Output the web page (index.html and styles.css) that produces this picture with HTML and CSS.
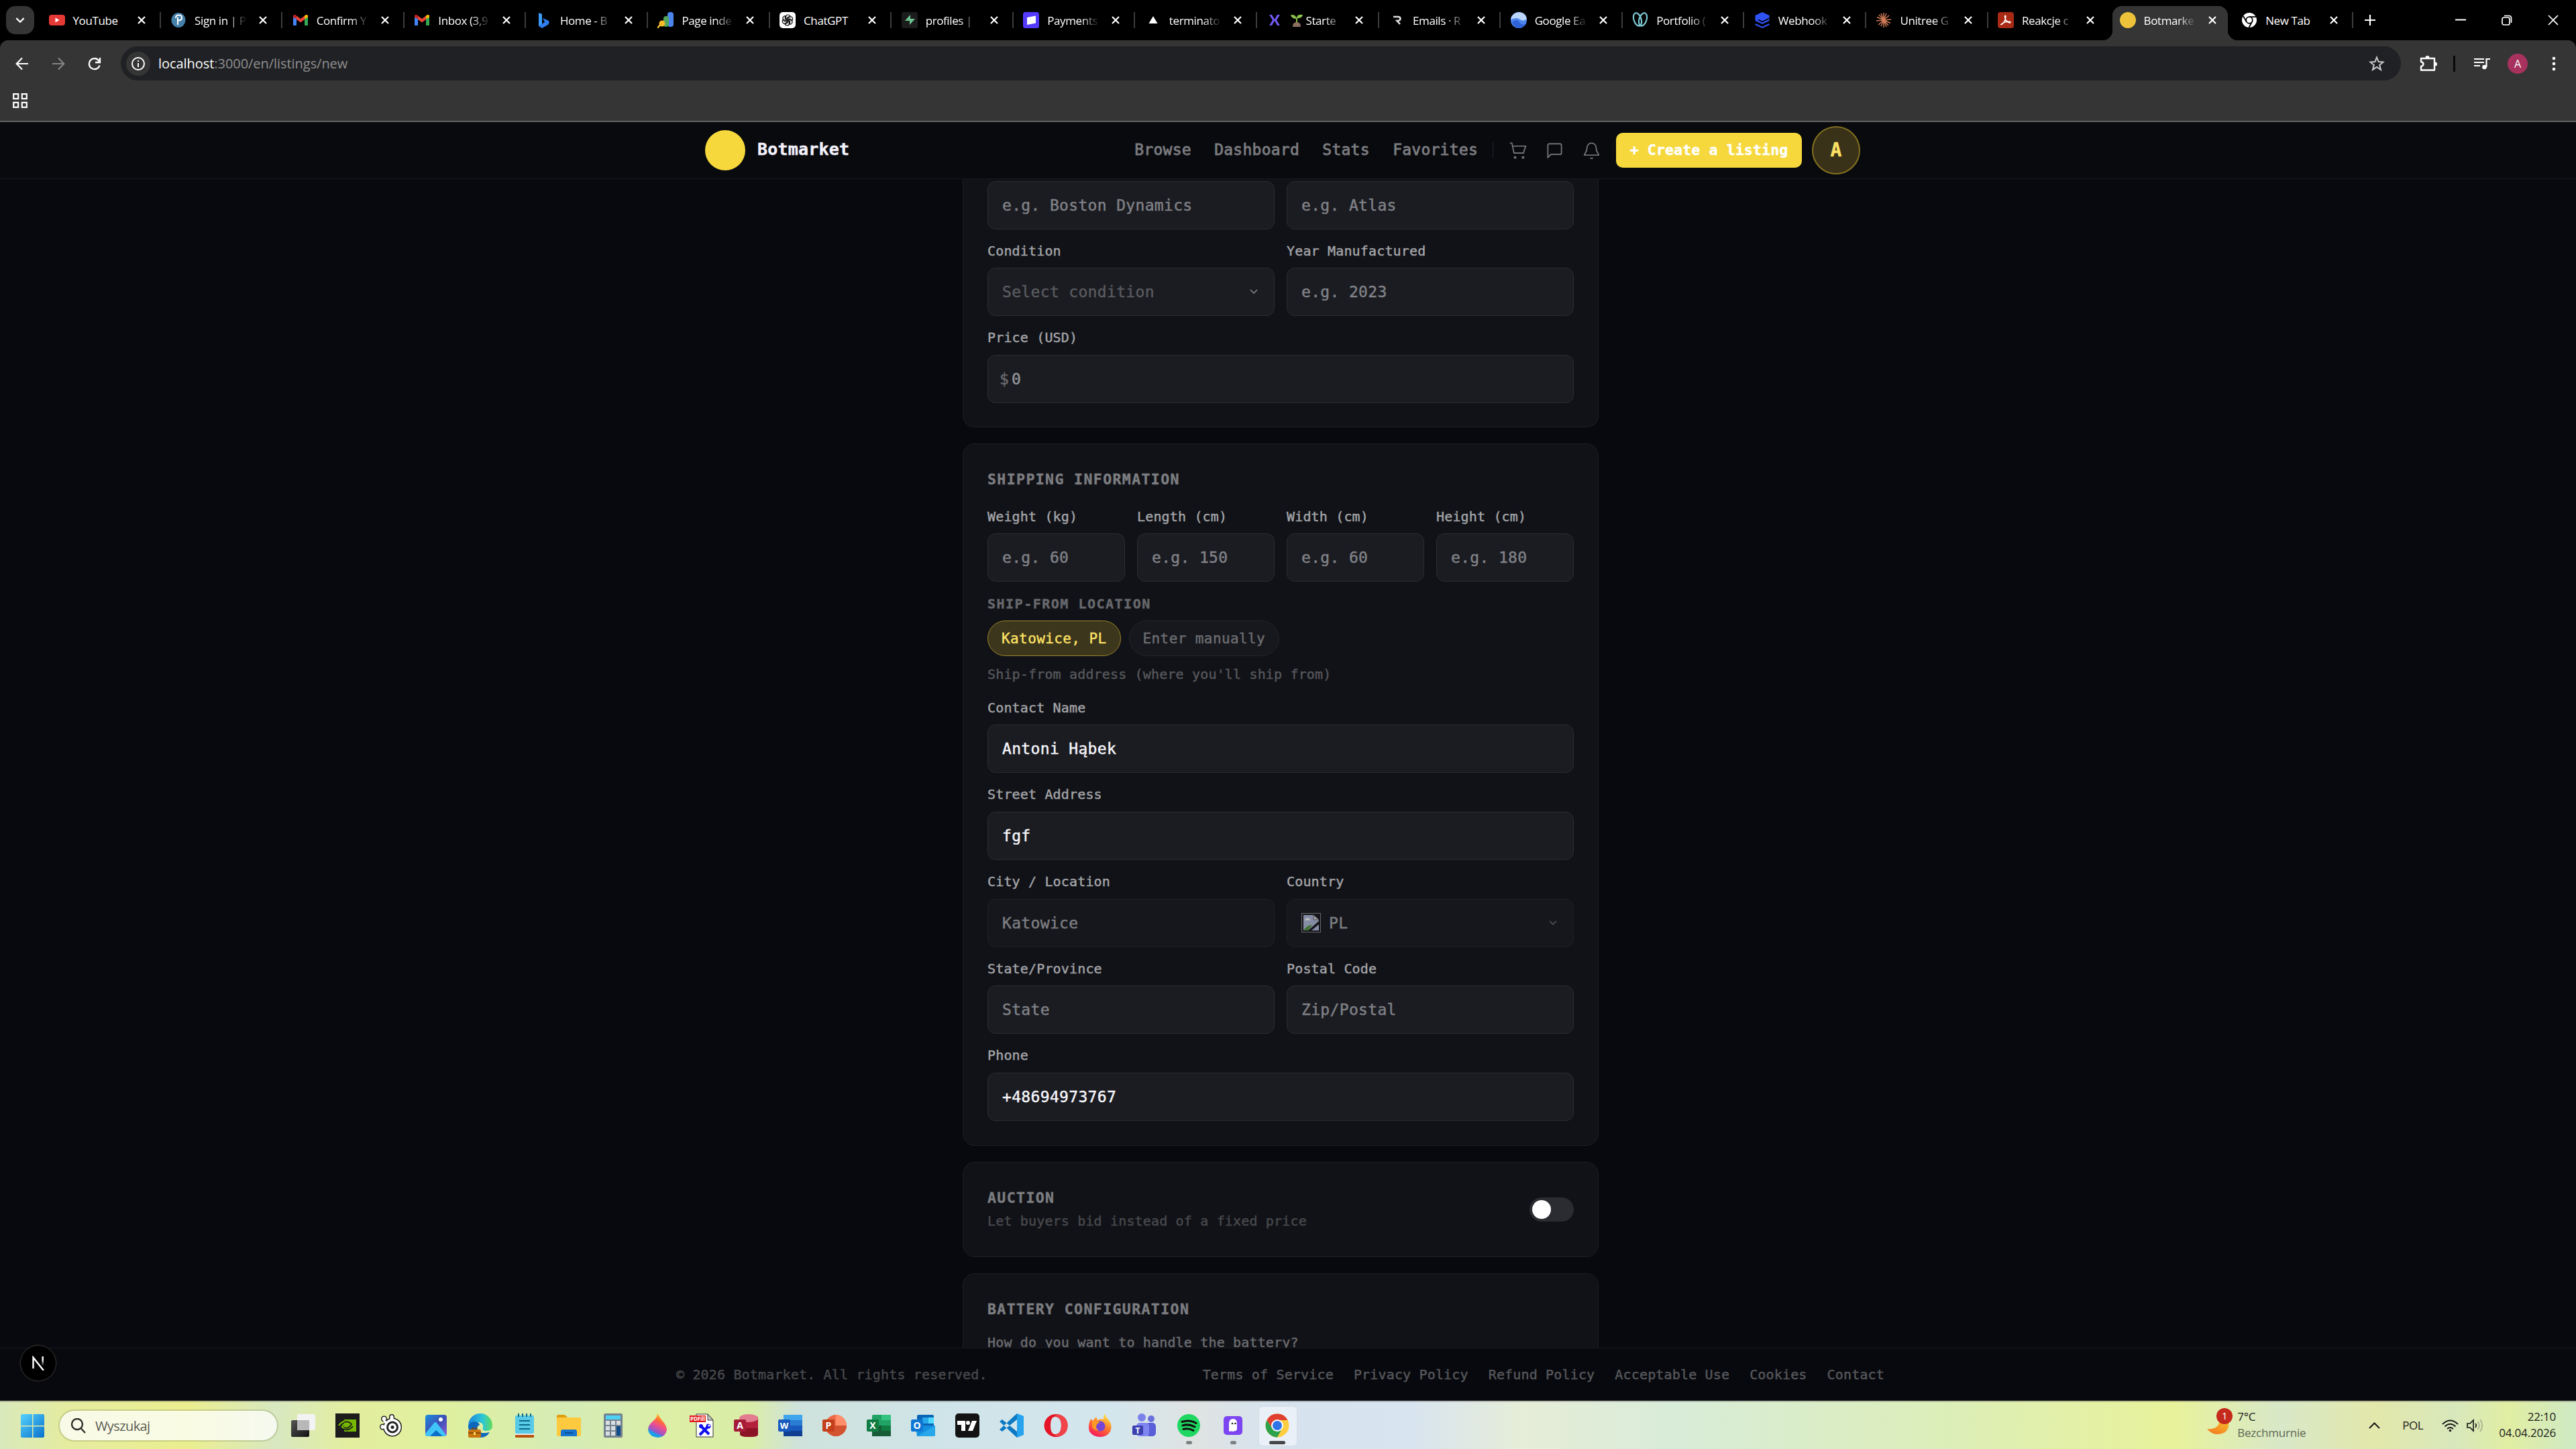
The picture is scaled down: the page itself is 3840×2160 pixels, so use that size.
FILE: index.html
```html
<!DOCTYPE html>
<html lang="en">
<head>
    <meta charset="UTF-8">
    <meta name="viewport" content="width=device-width, initial-scale=1.0">
    <title>Botmarket</title>
    <link rel="stylesheet" href="styles.css">
</head>
<body>
    <!-- Shared icons -->
    <svg class="defs" width="0" height="0">
        <symbol id="x" viewBox="0 0 12 12"><path d="M1 1l10 10M11 1L1 11" stroke="#fff" stroke-width="2.2"/></symbol>
        <symbol id="gmail" viewBox="0 0 24 24"><path d="M1 20V6l5 4v10z" fill="#4285f4"/><path d="M18 20V10l5-4v14z" fill="#34a853"/><path d="M18 10V5.5q3-2.5 5-.5v3z" fill="#fbbc04"/><path d="M1 8V5q2-2 5 .5V10z" fill="#c5221f"/><path d="M6 5.5l6 4.5 6-4.5V11l-6 4.5L6 11z" fill="#ea4335"/></symbol>
        <symbol id="chev" viewBox="0 0 12 8"><path d="M1 1l5 5 5-5" fill="none" stroke="currentColor" stroke-width="1.5"/></symbol>
    </svg>

    <!-- Browser tabs -->
    <div class="tabs">
        <div class="tab-search"><svg width="14" height="9" viewBox="0 0 12 8"><path d="M1 1l5 5 5-5" fill="none" stroke="#fff" stroke-width="2"/></svg></div>
        <div class="tab">
            <svg class="fav" viewBox="0 0 24 24"><rect y="4" width="24" height="16" rx="4" fill="#e53935"/><path d="M9.5 8.5v7l6-3.5z" fill="#fff"/></svg>
            <span class="tab-title">YouTube</span><svg class="close"><use href="#x"/></svg>
        </div>
        <div class="tab">
            <svg class="fav" viewBox="0 0 24 24"><ellipse cx="12" cy="12" rx="10.5" ry="11" fill="#4580a8"/><path d="M8 9q0-4.500 4.500-4.500T17 8.500q0 4-5 4M11 8v11" fill="none" stroke="#fff" stroke-width="2"/></svg>
            <span class="tab-title">Sign in | P</span><svg class="close"><use href="#x"/></svg>
        </div>
        <div class="tab">
            <svg class="fav"><use href="#gmail"/></svg>
            <span class="tab-title">Confirm Y</span><svg class="close"><use href="#x"/></svg>
        </div>
        <div class="tab">
            <svg class="fav"><use href="#gmail"/></svg>
            <span class="tab-title">Inbox (3,9</span><svg class="close"><use href="#x"/></svg>
        </div>
        <div class="tab">
            <svg class="fav" viewBox="0 0 24 24"><path d="M4 1l5 2v15l-5 3z" fill="#3b9cf5"/><path d="M10 9l9 4q2 5-3 7l-7 4-5-3 9-6z" fill="#2f7bee"/></svg>
            <span class="tab-title">Home - B</span><svg class="close"><use href="#x"/></svg>
        </div>
        <div class="tab">
            <svg class="fav" viewBox="0 0 24 24"><rect x="15" width="9" height="22" rx="4" fill="#4c84ee"/><rect x="9" y="6" width="8" height="16" rx="4" fill="#4fa65b"/><circle cx="7" cy="17" r="4.5" fill="#f5bb2d"/><path d="M4 19l-4 5" stroke="#f5bb2d" stroke-width="2.5"/></svg>
            <span class="tab-title">Page inde</span><svg class="close"><use href="#x"/></svg>
        </div>
        <div class="tab">
            <svg class="fav" viewBox="0 0 24 24"><rect width="24" height="24" rx="5" fill="#fff"/><g fill="none" stroke="#111" stroke-width="1.2"><path id="petal" d="M9.600 13.400V7q0-3 3-3 2 0 3.200 1.700l-4 2.300v4.600"/><use href="#petal" transform="rotate(60 12 12)"/><use href="#petal" transform="rotate(120 12 12)"/><use href="#petal" transform="rotate(180 12 12)"/><use href="#petal" transform="rotate(240 12 12)"/><use href="#petal" transform="rotate(300 12 12)"/></g></svg>
            <span class="tab-title">ChatGPT</span><svg class="close"><use href="#x"/></svg>
        </div>
        <div class="tab">
            <svg class="fav" viewBox="0 0 24 24"><rect width="24" height="24" rx="3" fill="#1c1c1c"/><path d="M13 4v6h7l-8 9v-6H5z" fill="#6cc491"/></svg>
            <span class="tab-title">profiles |</span><svg class="close"><use href="#x"/></svg>
        </div>
        <div class="tab">
            <svg class="fav" viewBox="0 0 24 24"><rect width="24" height="24" rx="3.5" fill="#533afd"/><path d="M6 8l13-2.5v11L6 19z" fill="#fff"/></svg>
            <span class="tab-title">Payments</span><svg class="close"><use href="#x"/></svg>
        </div>
        <div class="tab">
            <svg class="fav" viewBox="0 0 24 24"><path d="M12 6l6.5 11h-13z" fill="#fff"/></svg>
            <span class="tab-title">terminato</span><svg class="close"><use href="#x"/></svg>
        </div>
        <div class="tab">
            <svg class="fav" viewBox="0 0 24 24"><path d="M4 4h4l4 7 4-7h4l-5 8 5 8h-4l-4-7-4 7H4l5-8z" fill="#7258f2"/></svg>
            <span class="tab-title"><svg class="sprout" viewBox="0 0 18 20"><path d="M9 13V6" stroke="#8bc34a" stroke-width="2"/><path d="M9 7Q1 7 0 1q8-1 9 6zM9 6q0-6 9-5-1 6-9 5z" fill="#8bc34a"/><path d="M3 19q0-7 6-7t6 7z" fill="#8d6e63"/></svg> Starte</span><svg class="close"><use href="#x"/></svg>
        </div>
        <div class="tab">
            <svg class="fav" viewBox="0 0 24 24"><path d="M7 7h7q3.5 0 3.5 3t-5 3l4.5 5" fill="none" stroke="#ddd" stroke-width="2.6"/></svg>
            <span class="tab-title">Emails · R</span><svg class="close"><use href="#x"/></svg>
        </div>
        <div class="tab">
            <svg class="fav" viewBox="0 0 24 24"><circle cx="12" cy="12" r="12" fill="#4d87ee"/><path d="M0 11Q2 1 12 0q10 0 12 10-5 5-10 1T0 11z" fill="#bcd6fb"/><path d="M2 15q7-6 11 0t9 2q-3 7-10 7-7-1-10-9z" fill="#2f62d5"/></svg>
            <span class="tab-title">Google Ea</span><svg class="close"><use href="#x"/></svg>
        </div>
        <div class="tab">
            <svg class="fav" viewBox="0 0 24 24"><g fill="none" stroke="#7cc6d2" stroke-width="2.2"><ellipse cx="8" cy="11" rx="5.5" ry="10" transform="rotate(-18 8 11)"/><ellipse cx="16" cy="11" rx="5.5" ry="10" transform="rotate(18 16 11)"/></g></svg>
            <span class="tab-title">Portfolio (</span><svg class="close"><use href="#x"/></svg>
        </div>
        <div class="tab">
            <svg class="fav" viewBox="0 0 24 24"><path d="M12 0l10.5 5v8L12 18 1.5 13V5z" fill="#2f52f5"/><path d="M6 11.5l6 3 10-5M1.5 16L12 22l10.5-6" fill="none" stroke="#000" stroke-width="1.6"/><path d="M1.5 18L12 23l10.5-5" fill="none" stroke="#2f52f5" stroke-width="2"/></svg>
            <span class="tab-title">Webhook</span><svg class="close"><use href="#x"/></svg>
        </div>
        <div class="tab">
            <svg class="fav" viewBox="0 0 24 24"><path d="M12 1v22M1 13l22-2M5 4l14 16M20 5L4 19M8 2l8 20M16 2L8 21M2 7.500l20 9" stroke="#d07a57" stroke-width="1.5"/></svg>
            <span class="tab-title">Unitree G</span><svg class="close"><use href="#x"/></svg>
        </div>
        <div class="tab no-sep">
            <svg class="fav" viewBox="0 0 24 24"><rect width="24" height="24" rx="4" fill="#a82a14"/><path d="M5 18.500c3 0 7-7 7-12 0-2-2-1.500-1.500 1 .8 4 4 7.500 7 8.500 2 .5 2-1.500 0-1.700-4-.4-9 .8-12.500 4.200z" fill="none" stroke="#fff" stroke-width="1.4"/></svg>
            <span class="tab-title">Reakcje c</span><svg class="close"><use href="#x"/></svg>
        </div>
        <div class="tab active no-sep">
            <svg class="fav" viewBox="0 0 24 24"><circle cx="12" cy="12" r="12" fill="#edc23a"/></svg>
            <span class="tab-title">Botmarke</span><svg class="close"><use href="#x"/></svg>
        </div>
        <div class="tab">
            <svg class="fav" viewBox="0 0 24 24"><circle cx="12" cy="12" r="11" fill="#fff"/><circle cx="12" cy="12" r="4.8" fill="#fff" stroke="#000" stroke-width="1.8"/><path d="M12 7.200h10M7.800 14.500L3 6M16 14.500L11.500 23" stroke="#000" stroke-width="1.8"/></svg>
            <span class="tab-title">New Tab</span><svg class="close"><use href="#x"/></svg>
        </div>
        <svg class="new-tab" width="18" height="18" viewBox="0 0 18 18"><path d="M9 1v16M1 9h16" stroke="#fff" stroke-width="2.2"/></svg>
        <div class="window-controls">
            <svg width="16" height="16" viewBox="0 0 16 16"><path d="M0 7.500h16" stroke="#fff" stroke-width="2"/></svg>
            <svg width="16" height="16" viewBox="0 0 16 16" fill="none" stroke="#fff" stroke-width="1.7"><rect x="1" y="4" width="11" height="11" rx="2.5"/><path d="M4 1.500h7q3.500 0 3.500 3.500v7"/></svg>
            <svg width="16" height="16" viewBox="0 0 16 16"><path d="M1 1l14 14M15 1L1 15" stroke="#fff" stroke-width="1.7"/></svg>
        </div>
    </div>

    <!-- Browser toolbar -->
    <div class="toolbar">
        <div class="toolbar-row">
            <div class="nav-buttons">
                <svg width="20" height="20" viewBox="0 0 20 20" fill="none" stroke="#fff" stroke-width="2.2"><path d="M19 10H2M10 1.500L1.700 10l8.300 8.500"/></svg>
                <svg width="20" height="20" viewBox="0 0 20 20" fill="none" stroke="#858585" stroke-width="2.2"><path d="M1 10h17M10 1.500l8.300 8.500-8.300 8.500"/></svg>
                <svg width="20" height="20" viewBox="0 0 20 20" fill="none" stroke="#fff" stroke-width="2.3"><path d="M17.500 12.500A8 8 0 1 1 17 6.500"/><path d="M18 1v7h-7"/></svg>
            </div>
            <div class="omnibox">
                <div class="site-info"><svg width="20" height="20" viewBox="0 0 20 20" fill="none" stroke="#fff" stroke-width="2"><circle cx="10" cy="10" r="9"/><path d="M10 9v6M10 5v2"/></svg></div>
                <span class="url"><b>localhost</b>:3000/en/listings/new</span>
                <svg class="star" width="24" height="24" viewBox="0 0 24 24"><path d="M12 2.500l2.600 6.600 7 .4-5.400 4.500 1.800 6.900-6-3.900-6 3.900L7.800 14 2.400 9.500l7-.4z" fill="none" stroke="#ccc" stroke-width="2"/></svg>
            </div>
            <div class="toolbar-end">
                <svg width="27" height="27" viewBox="0 0 27 27"><path d="M3 6h20v17.500H3V18q3.500-1 3.500-3.500T3 11z" fill="none" stroke="#fff" stroke-width="2.4" stroke-linejoin="round"/><path d="M9.500 5a3 3 0 0 1 6 0zM24 11.500a3 3 0 0 1 0 6z" fill="#fff"/></svg>
                <i class="bar"></i>
                <svg width="24" height="18" viewBox="0 0 24 18" fill="none" stroke="#fff" stroke-width="2.2"><path d="M0 2h15M0 7h15M0 12h9M18.500 14V2H24"/><circle cx="15.500" cy="14" r="3.3" fill="#fff" stroke="none"/></svg>
                <span class="profile">A</span>
                <svg width="6" height="22" viewBox="0 0 6 22" fill="#fff"><circle cx="3" cy="3" r="2.3"/><circle cx="3" cy="11" r="2.3"/><circle cx="3" cy="19" r="2.3"/></svg>
            </div>
        </div>
        <svg class="apps" width="22" height="22" viewBox="0 0 22 22" fill="none" stroke="#fff" stroke-width="2.2"><path d="M1.200 1.200h7v7h-7zM13.800 1.200h7v7h-7zM1.200 13.800h7v7h-7zM13.800 13.800h7v7h-7z"/></svg>
    </div>

    <!-- Page -->
    <div class="page">
        <header class="header">
            <span class="logo"></span>
            <span class="brand">Botmarket</span>
            <nav class="menu">
                <a>Browse</a>
                <a>Dashboard</a>
                <a>Stats</a>
                <a>Favorites</a>
            </nav>
            <i class="divider"></i>
            <div class="header-icons">
                <svg viewBox="0 0 24 24"><circle cx="8.5" cy="21" r="1"/><circle cx="19" cy="21" r="1"/><path d="M1.500 2h2.700l2.800 13.200h12.500L22.500 6H5.200"/></svg>
                <svg viewBox="0 0 24 24"><path d="M21 15a2 2 0 0 1-2 2H7l-4 4V5a2 2 0 0 1 2-2h14a2 2 0 0 1 2 2z"/></svg>
                <svg viewBox="0 0 24 24"><path d="M6 8a6 6 0 0 1 12 0c0 7 3.500 7.500 3.500 10h-19C2.500 15.500 6 15 6 8"/><path d="M10.300 21.500a2 2 0 0 0 3.400 0"/></svg>
            </div>
            <i class="divider faint"></i>
            <a class="create">+ Create a listing</a>
            <span class="avatar">A</span>
        </header>

        <main class="content">
            <section class="card card-cut">
                <div class="row">
                    <div class="field"><input placeholder="e.g. Boston Dynamics"></div>
                    <div class="field"><input placeholder="e.g. Atlas"></div>
                </div>
                <div class="row">
                    <div class="field"><label>Condition</label><div class="select muted">Select condition<svg class="chev"><use href="#chev"/></svg></div></div>
                    <div class="field"><label>Year Manufactured</label><input placeholder="e.g. 2023"></div>
                </div>
                <div class="row">
                    <div class="field"><label>Price (USD)</label><div class="select price"><span>$</span>0</div></div>
                </div>
            </section>

            <section class="card shipping">
                <h2>Shipping information</h2>
                <div class="row">
                    <div class="field"><label>Weight (kg)</label><input placeholder="e.g. 60"></div>
                    <div class="field"><label>Length (cm)</label><input placeholder="e.g. 150"></div>
                    <div class="field"><label>Width (cm)</label><input placeholder="e.g. 60"></div>
                    <div class="field"><label>Height (cm)</label><input placeholder="e.g. 180"></div>
                </div>
                <h3>Ship-from location</h3>
                <div class="pills">
                    <span class="pill selected">Katowice, PL</span>
                    <span class="pill">Enter manually</span>
                </div>
                <p class="hint">Ship-from address (where you'll ship from)</p>
                <div class="row">
                    <div class="field"><label>Contact Name</label><input value="Antoni Hąbek"></div>
                </div>
                <div class="row">
                    <div class="field"><label>Street Address</label><input value="fgf"></div>
                </div>
                <div class="row">
                    <div class="field"><label>City / Location</label><div class="select off">Katowice</div></div>
                    <div class="field"><label>Country</label><div class="select off">
                        <svg class="broken" viewBox="0 0 29 29"><rect x=".5" y=".5" width="28" height="28" fill="none" stroke="#8b8b8b"/><path d="M3 3h15l8 7v16H3z" fill="#b4c0e0"/><path d="M18 3v7h8z" fill="#ddd" stroke="#666"/><path d="M5 11q0-3 3-3 1-2 3 0 2 0 2 3z" fill="#fff"/><path d="M3 26q6-9 13-8l-6 8z" fill="#54983a"/><path d="M10 26L26 12v5L15 26z" fill="#16171b"/></svg>PL<svg class="chev"><use href="#chev"/></svg></div></div>
                </div>
                <div class="row">
                    <div class="field"><label>State/Province</label><input placeholder="State"></div>
                    <div class="field"><label>Postal Code</label><input placeholder="Zip/Postal"></div>
                </div>
                <div class="row">
                    <div class="field"><label>Phone</label><input value="+48694973767"></div>
                </div>
            </section>

            <section class="card auction">
                <div>
                    <h2>Auction</h2>
                    <p>Let buyers bid instead of a fixed price</p>
                </div>
                <span class="toggle"></span>
            </section>

            <section class="card battery">
                <h2>Battery configuration</h2>
                <p>How do you want to handle the battery?</p>
            </section>
        </main>

        <footer class="footer">
            <span>© 2026 Botmarket. All rights reserved.</span>
            <div class="footer-links">
                <a>Terms of Service</a>
                <a>Privacy Policy</a>
                <a>Refund Policy</a>
                <a>Acceptable Use</a>
                <a>Cookies</a>
                <a>Contact</a>
            </div>
        </footer>

        <!-- Dev tools badge -->
        <div class="next-badge">
            <svg width="20" height="22" viewBox="0 0 20 22"><defs><linearGradient id="nf" x1="0" y1="0" x2="0" y2="1"><stop offset=".4" stop-color="#fff"/><stop offset="1" stop-color="#fff" stop-opacity="0"/></linearGradient></defs><path d="M2.500 19V2.500L18 22" fill="none" stroke="#fff" stroke-width="2.4"/><rect x="15.500" y="1" width="2.4" height="14" fill="url(#nf)"/></svg>
        </div>
    </div>

    <!-- Taskbar -->
    <div class="taskbar">
        <svg class="start" width="35" height="35" viewBox="0 0 35 35"><defs><linearGradient id="win" gradientUnits="userSpaceOnUse" x1="0" y1="0" x2="35" y2="35"><stop stop-color="#55d3fc"/><stop offset="1" stop-color="#0a70cc"/></linearGradient></defs><path d="M1.500 0H17v17H0V1.500zM18.500 0H33.500L35 1.500V17H18.500zM0 18.500h17V35H1.500L0 33.500zM18.500 18.500H35v15L33.500 35h-15z" fill="url(#win)"/></svg>
        <div class="search">
            <svg width="23" height="23" viewBox="0 0 23 23" fill="none" stroke="#2f2f2b" stroke-width="2.4"><circle cx="10" cy="9" r="8"/><path d="M15.500 15l6.500 7"/></svg>
            <span>Wyszukaj</span>
        </div>
        <div class="apps-row">
            <div class="app"><svg viewBox="0 0 36 36"><defs><linearGradient id="tv" x2="1" y2="1"><stop stop-color="#555"/><stop offset="1" stop-color="#111"/></linearGradient></defs><rect y="10" width="27" height="25" rx="2" fill="url(#tv)"/><rect x="9" y="1" width="27" height="24" rx="2" fill="#f3f3f3"/><rect x="9" y="10" width="18" height="15" fill="#b8b8b8"/></svg></div>
            <div class="app"><svg viewBox="0 0 36 36"><rect width="36" height="36" fill="#1c1c1c"/><path d="M13 9h18v18H13z" fill="#76b900"/><path d="M5 18q8-11 19-3-6 11-14 5 3-7 9-3-2 4-4 3" fill="none" stroke="#76b900" stroke-width="2.4"/><path d="M13 13q7-2 11 3-5 8-11 5" fill="none" stroke="#1c1c1c" stroke-width="1.7"/><path d="M13 24q8 2 13-5" fill="none" stroke="#1c1c1c" stroke-width="1.7"/></svg></div>
            <div class="app"><svg viewBox="0 0 36 36"><g fill="#222"><rect x="14" y="1" width="8" height="14" rx="4"/><circle cx="6.500" cy="8" r="4.5"/><circle cx="4.500" cy="20" r="4.5"/><circle cx="19" cy="20.500" r="14"/></g><g fill="#fff"><rect x="15.500" y="2.500" width="5" height="12" rx="2.5"/><circle cx="6.500" cy="8" r="3"/><path d="M7 9l5 5-3 3-4-6z"/><circle cx="4.500" cy="20" r="3"/><path d="M4 18.500h6v3H4z"/><circle cx="19" cy="20.500" r="12.5"/></g><circle cx="19" cy="20.500" r="7.5" fill="none" stroke="#222" stroke-width="3"/><circle cx="19" cy="20.500" r="2.5" fill="#222"/></svg></div>
            <div class="app"><svg viewBox="0 0 36 36"><defs><linearGradient id="ph" x2="1" y2="1"><stop stop-color="#1b8fe0"/><stop offset=".5" stop-color="#3c4fb5"/><stop offset="1" stop-color="#8a62d6"/></linearGradient></defs><rect x="2" y="2" width="32" height="32" rx="4" fill="url(#ph)"/><path d="M2 30L15 14q2-2 4 0l14 18q-1 2-3 2H5q-3 0-3-4z" fill="#3fc4f8"/><path d="M9 34l9-9 10 9z" fill="#0d6fc9"/><circle cx="25" cy="9" r="3" fill="#fff"/></svg></div>
            <div class="app"><svg viewBox="0 0 36 36"><defs><linearGradient id="ed" x2="1"><stop stop-color="#1b84dc"/><stop offset=".6" stop-color="#2ec6d6"/><stop offset="1" stop-color="#5fdc58"/></linearGradient></defs><path d="M0 18A18 18 0 0 1 36 18q0 8-9 8-7 0-5-5 1-8-8-8T0 22z" fill="url(#ed)"/><path d="M0 20q2-8 10-8 6 1 7 5-4 2-4 6 1 9 19 5-5 8-14 8Q2 35 0 20z" fill="#0c67bd"/><rect y="24" width="19" height="12" rx="2" fill="#c9750e"/><path d="M0 29h19M6 24v-2h7v2" fill="none" stroke="#7c420a" stroke-width="1.5"/><path d="M9.500 28v4" stroke="#ffd75e" stroke-width="3"/></svg></div>
            <div class="app"><svg viewBox="0 0 36 36"><rect x="4" y="30" width="28" height="6" rx="1.5" fill="#b9510f"/><rect x="4" y="28" width="28" height="4" fill="#eee"/><rect x="4" y="3" width="28" height="27" rx="2" fill="#58c9e6"/><path d="M9 0v5M15 0v5M21 0v5M27 0v5M10 11h16M10 17h16M10 23h16" stroke="#0b6a88" stroke-width="2"/></svg></div>
            <div class="app"><svg viewBox="0 0 36 36"><path d="M0 4q0-2 2-2h10l4 4v6H0z" fill="#dd9d0c"/><rect y="6" width="36" height="28" rx="2" fill="#fdc93f"/><path d="M6 34V27q0-3 3-3h18q3 0 3 3v7z" fill="#1574d0"/><path d="M12 29h12" stroke="#0c4d92" stroke-width="2"/></svg></div>
            <div class="app"><svg viewBox="0 0 36 36"><rect x="4" width="28" height="36" rx="2.5" fill="#75838f"/><rect x="7" y="3" width="22" height="6" fill="#4fd0f5"/><path d="M7 11h6v6H7zM15 11h6v6h-6zM23 11h6v6h-6zM7 19h6v6H7zM15 19h6v6h-6zM7 27h6v6H7zM15 27h6v6h-6z" fill="#d9dee2"/><path d="M23 19h6v14h-6z" fill="#114a8b"/></svg></div>
            <div class="app"><svg viewBox="0 0 36 36"><defs><linearGradient id="pn" x1=".7" x2=".3" y2="1"><stop stop-color="#ffd000"/><stop offset=".3" stop-color="#ff6a3d"/><stop offset=".5" stop-color="#ef4e8e"/><stop offset=".75" stop-color="#9556c8"/><stop offset=".85" stop-color="#18a0ea"/></linearGradient></defs><path d="M18 0q3 6 9 13 5 6 5 12-2 10-13 11Q6 35 4 25q0-8 8-14 6-5 6-11z" fill="url(#pn)"/></svg></div>
            <div class="app"><svg viewBox="0 0 36 36"><path d="M10 1h17l8 9v25H10z" fill="#fff" stroke="#333"/><path d="M27 1v9h8z" fill="#ccc" stroke="#333"/><rect x="0" y="3" width="24" height="10" fill="#e21b1b"/><text x="12" y="11" class="ic" font-size="8" textLength="22">PDFill</text><path d="M16 18l13 13M28 19L15 32" stroke="#1010ee" stroke-width="4"/><circle cx="17" cy="19" r="3" fill="#1010ee"/><circle cx="28" cy="19" r="3.5" fill="#1010ee"/><circle cx="29" cy="18" r="1.5" fill="#fff"/></svg></div>
            <div class="app"><svg viewBox="0 0 36 36"><path d="M9 5v26q0 4 14 4t13-4V5z" fill="#b2203a"/><path d="M9 22h27v9q0 4-13 4T9 31z" fill="#8c1226"/><ellipse cx="22" cy="7" rx="14" ry="6" fill="#e27c8e"/><rect y="9" width="18" height="18" rx="2" fill="#a61c38"/><text x="9" y="23" class="ic" font-size="14">A</text></svg></div>
            <div class="app"><svg viewBox="0 0 36 36"><rect x="8" y="2" width="28" height="32" rx="2" fill="#2b7cd3"/><path d="M8 2h28v8H8z" fill="#41a5ee"/><path d="M8 18h28v8H8z" fill="#185abd"/><path d="M8 26h28v8H8z" fill="#103f91"/><rect y="9" width="18" height="18" rx="2" fill="#185abd"/><text x="9" y="22.500" class="ic" font-size="13">W</text></svg></div>
            <div class="app"><svg viewBox="0 0 36 36"><circle cx="20" cy="18" r="16" fill="#ed6c47"/><path d="M20 2a16 16 0 0 1 16 16H20z" fill="#ff8f6b"/><path d="M4 18a16 16 0 0 0 32 0z" fill="#d35230"/><rect y="9" width="18" height="18" rx="2" fill="#c43e1c"/><text x="9" y="23" class="ic" font-size="14">P</text></svg></div>
            <div class="app"><svg viewBox="0 0 36 36"><rect x="8" y="2" width="28" height="32" rx="2" fill="#21a366"/><path d="M22 2h14v8H22z" fill="#33c481"/><path d="M8 18h14v16H8z" fill="#185c37"/><path d="M22 18h14v8H22z" fill="#107c41"/><path d="M22 26h14v8H22z" fill="#185c37"/><rect y="9" width="18" height="18" rx="2" fill="#107c41"/><text x="9" y="23" class="ic" font-size="14">X</text></svg></div>
            <div class="app"><svg viewBox="0 0 36 36"><rect x="9" y="2" width="25" height="22" rx="2" fill="#0a64b5"/><path d="M17 6h9v9h-9z" fill="#28a8ea"/><path d="M26 6h8v9h-8z" fill="#50d9ff"/><path d="M7 18l29 0v14q0 2-2 2H9z" fill="#1490df"/><path d="M36 18L10 34h24q2 0 2-2z" fill="#28a8ea"/><rect y="9" width="18" height="18" rx="2" fill="#0f78d4"/><text x="9" y="23" class="ic" font-size="14">O</text></svg></div>
            <div class="app"><svg viewBox="0 0 36 36"><rect width="36" height="36" rx="5" fill="#131313"/><path d="M3 11h12v15H9v-9H3z" fill="#fff"/><circle cx="19" cy="14" r="3" fill="#fff"/><path d="M25 11h7l-6 15h-7z" fill="#fff"/></svg></div>
            <div class="app"><svg viewBox="0 0 36 36"><path d="M26 0l10 4v28l-10 4z" fill="#27a3ee"/><path d="M26 9L4 27l-4-3L26 0zM26 27L4 9l-4 3 26 24z" fill="#0c79c4"/></svg></div>
            <div class="app"><svg viewBox="0 0 36 36"><path fill-rule="evenodd" d="M18 1a17.500 17 0 1 0 .1 0zM18 5q8 1 8 13t-8 13-8-13 8-13z" fill="#e51426"/><path d="M22 1.500q13.500 3 13.500 16.500T22 34.500q-4 0-6-3.500 10 1 10-13T16 5q2-3.500 6-3.500z" fill="#f0434a"/></svg></div>
            <div class="app"><svg viewBox="0 0 36 36"><defs><linearGradient id="ff" x1=".8" x2=".3" y2="1"><stop stop-color="#fff04a"/><stop offset=".5" stop-color="#ff7b2c"/><stop offset="1" stop-color="#f5135e"/></linearGradient></defs><path d="M4 8l3 3 5-6 2 5q5-3 9-1 0-7 2-9 1 5 6 10 6 8 2 17-5 8-15 8T2 27Q-1 18 4 8z" fill="url(#ff)"/><circle cx="18" cy="19" r="7.5" fill="#7545d6"/><path d="M6 12q6-2 12 2-5 1-5 3-3 5 3 8-8 1-10-5z" fill="#ff9a25"/></svg></div>
            <div class="app"><svg viewBox="0 0 36 36"><circle cx="14" cy="6" r="6" fill="#7b83eb"/><circle cx="28" cy="8" r="5" fill="#6870dc"/><rect x="20" y="14" width="15" height="20" rx="5" fill="#5a5ed8"/><rect x="6" y="14" width="19" height="20" rx="5" fill="#7f86f0"/><rect x="0" y="18" width="16" height="14" rx="2" fill="#3b3fb0"/><text x="8" y="29.500" class="ic" font-size="12">T</text></svg></div>
            <div class="app running"><svg viewBox="0 0 36 36"><circle cx="18" cy="18" r="17" fill="#1ed760"/><path d="M8 12.500q11-4 21 2M9 18q9-3 18 2M10 23.500q8-2 15 2" fill="none" stroke="#111" stroke-width="3" stroke-linecap="round"/></svg></div>
            <div class="app running"><svg viewBox="0 0 36 36"><rect x="4" y="4" width="28" height="28" rx="5" fill="#7c45f0"/><path d="M12 26V16q0-8 6-8t6 7v8q-1 4-4 3-2 2-4 0-2 2-4 0z" fill="#fff"/><circle cx="17" cy="15" r="1.3" fill="#222"/><circle cx="21.500" cy="15" r="1.3" fill="#222"/></svg></div>
            <div class="app focused"><svg viewBox="0 0 36 36"><circle cx="18" cy="18" r="17.5" fill="#ffcd40"/><path d="M2.500 10a17.500 17.500 0 0 1 31 0H18L10.500 22z" fill="#e0402f"/><path d="M2.500 10a17.500 17.500 0 0 0 15.500 25.500L25.500 22H10.500z" fill="#2da24c"/><circle cx="18" cy="18" r="9" fill="#fff"/><circle cx="18" cy="18" r="7" fill="#2f75e8"/></svg></div>
        </div>
        <div class="tray">
            <div class="weather">
                <svg width="42" height="42" viewBox="0 0 42 42"><defs><linearGradient id="mo" x1="1" x2=".3" y2="1"><stop stop-color="#f6c02c"/><stop offset="1" stop-color="#f47c20"/></linearGradient></defs><path d="M1 26q16 2 19-12h13q2 13-7 18-15 6-25-6z" fill="url(#mo)"/></svg>
                <span class="alert">1</span>
                <div><span>7°C</span><span class="dim">Bezchmurnie</span></div>
            </div>
            <svg class="up" width="17" height="10" viewBox="0 0 17 10"><path d="M1 9l7.500-7.500L16 9" fill="none" stroke="#1a1a1a" stroke-width="2"/></svg>
            <span class="lang">POL</span>
            <svg class="wifi" width="25" height="19" viewBox="0 0 25 19" fill="none" stroke="#1a1a1a" stroke-width="1.8"><path d="M1 7q11.500-11 23 0M4.500 10.500q8-7.500 16 0M8 14q4.500-4 9 0"/><circle cx="12.500" cy="16.500" r="1.8" fill="#1a1a1a" stroke="none"/></svg>
            <svg class="sound" width="25" height="20" viewBox="0 0 25 20" fill="none" stroke="#1a1a1a" stroke-width="1.7"><path d="M1 7h4l5-5v16l-5-5H1zM13 7q2.500 3 0 6"/><path d="M16.500 4q4.500 6 0 12M20 1q6.500 9 0 18" stroke="#a8ad8c"/></svg>
            <div class="clock"><span>22:10</span><span>04.04.2026</span></div>
        </div>
    </div>
</body>
</html>
```

FILE: styles.css
```css
* {
    margin: 0;
    padding: 0;
    box-sizing: border-box;
}

body {
    display: flex;
    flex-direction: column;
    width: 3840px;
    height: 2160px;
    overflow: hidden;
    background: #000;
    font-family: "Open Sans", "Noto Sans", sans-serif;
}

svg {
    display: block;
    flex: none;
}

.defs {
    position: absolute;
}

/* Tab strip */
.tabs {
    display: flex;
    align-items: center;
    height: 60px;
    padding-left: 9px;
    color: #fff;
}

.tab-search {
    display: flex;
    align-items: center;
    justify-content: center;
    width: 42px;
    height: 42px;
    margin-right: 6px;
    border-radius: 14px;
    background: #353535;
}

.tab {
    position: relative;
    display: flex;
    align-items: center;
    flex: none;
    width: 181.6px;
    height: 60px;
    padding-left: 15.5px;
}

.tab::after {
    content: "";
    position: absolute;
    right: -1px;
    top: 18px;
    width: 2px;
    height: 24px;
    background: #3c3c3c;
}

.tab.no-sep::after {
    display: none;
}

.fav {
    width: 24px;
    height: 24px;
    margin-right: 12px;
}

.tab-title {
    width: 78px;
    margin-right: 18px;
    white-space: nowrap;
    font-size: 17px;
    line-height: 28px;
    letter-spacing: -0.4px;
    padding-top: 2px;
    -webkit-mask-image: linear-gradient(to right, #000 65%, transparent);
    mask-image: linear-gradient(to right, #000 65%, transparent);
}

.tab:nth-child(2) .tab-title,
.tab:nth-child(8) .tab-title,
.tab:nth-child(20) .tab-title {
    -webkit-mask-image: none;
    mask-image: none;
}

.sprout {
    display: inline-block;
    width: 18px;
    height: 20px;
    vertical-align: -4px;
}

.close {
    width: 12px;
    height: 12px;
}

.tab.active::before {
    content: "";
    position: absolute;
    z-index: -1;
    left: -10px;
    right: -10px;
    top: 9px;
    bottom: 0;
    background:
        radial-gradient(circle at 0 0, transparent 15px, #353535 15.5px) left bottom / 15px 15px no-repeat,
        radial-gradient(circle at 100% 0, transparent 15px, #353535 15.5px) right bottom / 15px 15px no-repeat,
        linear-gradient(#353535, #353535) center bottom / calc(100% - 30px) 36px no-repeat,
        radial-gradient(circle at 15px 15px, #353535 15px, transparent 15.5px) 15px 0 / 15px 15px no-repeat,
        radial-gradient(circle at 0 15px, #353535 15px, transparent 15.5px) calc(100% - 15px) 0 / 15px 15px no-repeat,
        linear-gradient(#353535, #353535) center top / calc(100% - 60px) 100% no-repeat;
}

.new-tab {
    margin-left: 17px;
}

.window-controls {
    display: flex;
    gap: 53px;
    margin-left: auto;
    margin-right: 26px;
}

/* Toolbar */
.toolbar {
    height: 122px;
    padding-top: 9px;
    background: #353535;
    border-bottom: 2px solid #636363;
    border-radius: 12px 12px 0 0;
}

.toolbar-row {
    display: flex;
    align-items: center;
    height: 51px;
}

.nav-buttons {
    display: flex;
    gap: 34px;
    width: 180px;
    padding-left: 23px;
}

.omnibox {
    display: flex;
    align-items: center;
    width: 3399px;
    height: 51px;
    padding: 0 24px 0 8px;
    border-radius: 26px;
    background: #202124;
}

.site-info {
    display: flex;
    align-items: center;
    justify-content: center;
    width: 36px;
    height: 36px;
    border-radius: 50%;
    background: #353535;
}

.url {
    margin-left: 12px;
    color: #8f8f90;
    font-size: 20px;
    letter-spacing: -0.05px;
}

.url b {
    color: #fff;
    font-weight: normal;
}

.star {
    margin-left: auto;
}

.toolbar-end {
    display: flex;
    align-items: center;
    padding-left: 27px;
}

.bar {
    width: 3px;
    height: 24px;
    margin: 0 28px 0 24px;
    background: #080808;
}

.profile {
    width: 30px;
    height: 30px;
    margin: 0 36px 0 26px;
    border-radius: 50%;
    background: #a8325e;
    color: #fff;
    font-size: 16px;
    line-height: 30px;
    text-align: center;
}

.apps {
    margin: 19px 0 0 19px;
}

/* Page shell */
.page {
    position: relative;
    display: flex;
    flex-direction: column;
    height: 1906px;
    background: #08090e;
    font-family: "DejaVu Sans Mono", "Liberation Mono", monospace;
    font-size: 20px;
    letter-spacing: 0.16px;
    -webkit-text-stroke: 0.45px currentColor;
}

.header {
    display: flex;
    align-items: center;
    flex: none;
    height: 85px;
    padding: 0 1067px 0 1051px;
    background: #090a0e;
    border-bottom: 1px solid #17181d;
}

.logo {
    width: 60px;
    height: 60px;
    margin-right: 18px;
    border-radius: 50%;
    background: #f6d83c;
}

.brand {
    color: #f2f1fb;
    font-size: 25px;
    font-weight: bold;
    letter-spacing: 0.2px;
    line-height: 30px;
    margin-top: -2px;
}

.menu {
    display: flex;
    gap: 34.3px;
    margin: -2px 0 0 auto;
    color: #7b7c80;
    font-size: 23px;
    letter-spacing: 0.25px;
    -webkit-text-stroke-width: 0.8px;
}

.divider {
    width: 1px;
    height: 24px;
    margin: 0 23px 0 22px;
    background: #232429;
}

.divider.faint {
    margin: 0 4px 0 18px;
    background: #15161b;
}

.header-icons {
    display: flex;
    gap: 28px;
}

.header-icons svg {
    width: 27px;
    height: 27px;
    fill: none;
    stroke: #7b7c80;
    stroke-width: 1.5;
}

.create {
    width: 277px;
    height: 52px;
    margin-right: 15px;
    border-radius: 10px;
    background: #f6d83c;
    color: #fff;
    font-size: 21.5px;
    font-weight: bold;
    letter-spacing: 0.15px;
    line-height: 51px;
    text-align: center;
}

.avatar {
    width: 72px;
    height: 72px;
    border: 2px solid #83701f;
    border-radius: 50%;
    background: #393219;
    color: #fbe064;
    font-size: 28px;
    font-weight: bold;
    line-height: 68px;
    text-align: center;
}

/* Form */
.content {
    display: flex;
    flex-direction: column;
    gap: 24px;
    flex: 1;
    min-height: 0;
    width: 948px;
    margin-left: 1435px;
    overflow: hidden;
}

.card {
    flex: none;
    padding: 38px 36px 36px;
    border: 1px solid #1e1f24;
    border-radius: 18px;
    background: #111217;
}

.card-cut {
    padding-top: 2.6px;
    padding-bottom: 35px;
    border-top: 0;
    border-radius: 0 0 18px 18px;
}

.card h2 {
    color: #7c7d81;
    font-size: 21.5px;
    line-height: 30px;
    letter-spacing: 1.4px;
    text-transform: uppercase;
}

.row {
    display: flex;
    gap: 18px;
}

.row + .row {
    margin-top: 17px;
}

.field {
    flex: 1;
    min-width: 0;
}

label {
    display: block;
    margin-bottom: 10.6px;
    color: #a3a4a8;
    font-size: 20px;
    line-height: 30px;
}

input,
.select {
    display: flex;
    align-items: center;
    width: 100%;
    height: 72px;
    padding: 0 21px;
    border: 1px solid #2b2c31;
    border-radius: 12px;
    background: #1b1c21;
    color: #f5f5fa;
    font-family: inherit;
    font-size: 23px;
    letter-spacing: 0.33px;
    outline: none;
    -webkit-text-stroke: 0.45px currentColor;
}

input::placeholder {
    color: #808187;
    opacity: 1;
}

.select {
    position: relative;
}

.select.muted {
    color: #595a5f;
}

.select.price {
    padding-left: 17px;
    color: #95969b;
}

.price span {
    width: 18px;
    color: #68696d;
}

.select.off {
    border-color: #1f2025;
    background: #16171c;
    color: #7d7e82;
}

.chev {
    width: 12px;
    height: 8px;
    margin-left: auto;
    margin-right: 3px;
    color: #87888c;
}

.off .chev {
    color: #55565b;
}

.broken {
    width: 29px;
    height: 29px;
    margin-right: 12px;
    opacity: 0.7;
}

.shipping h2 {
    margin-bottom: 25px;
}

.shipping h3 {
    margin: 18px 0 10px;
    color: #67686c;
    font-size: 20px;
    line-height: 30px;
    letter-spacing: 1.5px;
    text-transform: uppercase;
}

.pills {
    display: flex;
    gap: 12px;
}

.pill {
    height: 53px;
    padding: 0 20px;
    border: 1px solid #25262b;
    border-radius: 27px;
    background: #17181d;
    color: #6c6d71;
    font-size: 21px;
    letter-spacing: 0.4px;
    line-height: 52px;
}

.pill.selected {
    border-color: #9c8529;
    background: #3c361d;
    color: #fbe064;
}

.hint {
    margin: 12px 0 19.4px;
    color: #56575b;
    line-height: 30px;
}

.auction {
    display: flex;
    align-items: center;
    justify-content: space-between;
    height: 142px;
    padding: 1px 36px 0;
}

.auction h2,
.auction p {
    line-height: 34px;
}

.auction p {
    color: #48494d;
}

.toggle {
    width: 66px;
    height: 36px;
    padding: 4px;
    border-radius: 18px;
    background: #2b2c31;
}

.toggle::before {
    content: "";
    display: block;
    width: 28px;
    height: 28px;
    border-radius: 50%;
    background: #fff;
}

.battery h2 {
    margin-bottom: 19px;
}

.battery p {
    color: #6c6d71;
    line-height: 30px;
}

/* Footer */
.footer {
    display: flex;
    align-items: center;
    justify-content: space-between;
    flex: none;
    height: 79px;
    padding: 0 1031px 0 1008px;
    border-top: 1px solid #17181d;
    background: #08090e;
    color: #47484c;
}

.footer-links {
    display: flex;
    gap: 30px;
    color: #56575b;
}

.next-badge {
    position: absolute;
    left: 30px;
    bottom: 29px;
    display: flex;
    align-items: center;
    justify-content: center;
    width: 54px;
    height: 54px;
    border: 1px solid #303030;
    border-radius: 50%;
    background: #000;
    box-shadow: 0 0 0 1px #141416;
}

/* Taskbar */
.taskbar {
    display: flex;
    align-items: center;
    height: 72px;
    border-top: 2px solid rgba(90, 90, 90, 0.35);
    background: linear-gradient(to right, #d9e9bb 0, #e5eca0 100px, #ebee8f 280px, #d8e8c0 410px, #e3ee9f 520px, #e0f09e 650px, #d5ecb6 850px, #dcefa5 1000px, #daeda8 1120px, #cfe2dc 1190px, #cfe4e8 1400px, #d3e6ee 1650px, #dfe3e2 1780px, #d6e3ef 1900px, #d8e4f0 2100px, #e6edd8 2270px, #d8ecd8 2500px, #dceeb8 2900px, #e8f29a 3240px, #d8e8c8 3400px, #e3e8ab 3540px, #d8e8bc 3660px, #e1eea3 3740px, #cfe9c4 3840px);
    color: #1b1b1b;
    font-size: 17px;
}

.start {
    margin-left: 31px;
}

.search {
    display: flex;
    align-items: center;
    width: 328px;
    height: 48px;
    margin-left: 21px;
    padding-left: 16px;
    border: 2px solid rgba(120, 130, 80, 0.28);
    border-radius: 24px;
    background: rgba(255, 255, 255, 0.75);
    background-clip: padding-box;
    color: #5a5b54;
    font-size: 20px;
}

.search span {
    margin-left: 14px;
    letter-spacing: -0.6px;
}

.apps-row {
    display: flex;
    margin-left: 4px;
}

.app {
    position: relative;
    display: flex;
    align-items: center;
    justify-content: center;
    width: 66px;
    height: 70px;
    padding-bottom: 1px;
}

.app svg {
    position: relative;
    width: 36px;
    height: 36px;
}

.ic {
    fill: #fff;
    font-weight: bold;
    text-anchor: middle;
}

.running::after,
.focused::after {
    content: "";
    position: absolute;
    bottom: 7px;
    width: 9px;
    height: 5px;
    border-radius: 3px;
    background: #7b8083;
}

.focused::after {
    width: 24px;
    background: #444648;
}

.focused::before {
    content: "";
    position: absolute;
    left: 5px;
    top: 6px;
    width: 56px;
    height: 58px;
    border: 1px solid #d3dae2;
    border-radius: 6px;
    background: #e9f0f7;
}

.tray {
    display: flex;
    align-items: center;
    margin-left: auto;
    margin-right: 30px;
}

.weather {
    position: relative;
    display: flex;
    align-items: center;
    width: 242px;
}

.weather > div,
.clock {
    display: flex;
    flex-direction: column;
    line-height: 24px;
    letter-spacing: -0.2px;
}

.weather > div {
    margin: -2px 0 0 4px;
}

.dim {
    color: #5d6752;
}

.alert {
    position: absolute;
    left: 15px;
    top: -3px;
    width: 24px;
    height: 24px;
    border-radius: 50%;
    background: #c42b1c;
    color: #fff;
    font-size: 15px;
    line-height: 23px;
    text-align: center;
}

.lang {
    margin: -1px 28px 0 33px;
    letter-spacing: -0.4px;
}

.sound {
    margin-left: 12px;
}

.clock {
    margin: -2px 0 0 23px;
    text-align: right;
}
```
